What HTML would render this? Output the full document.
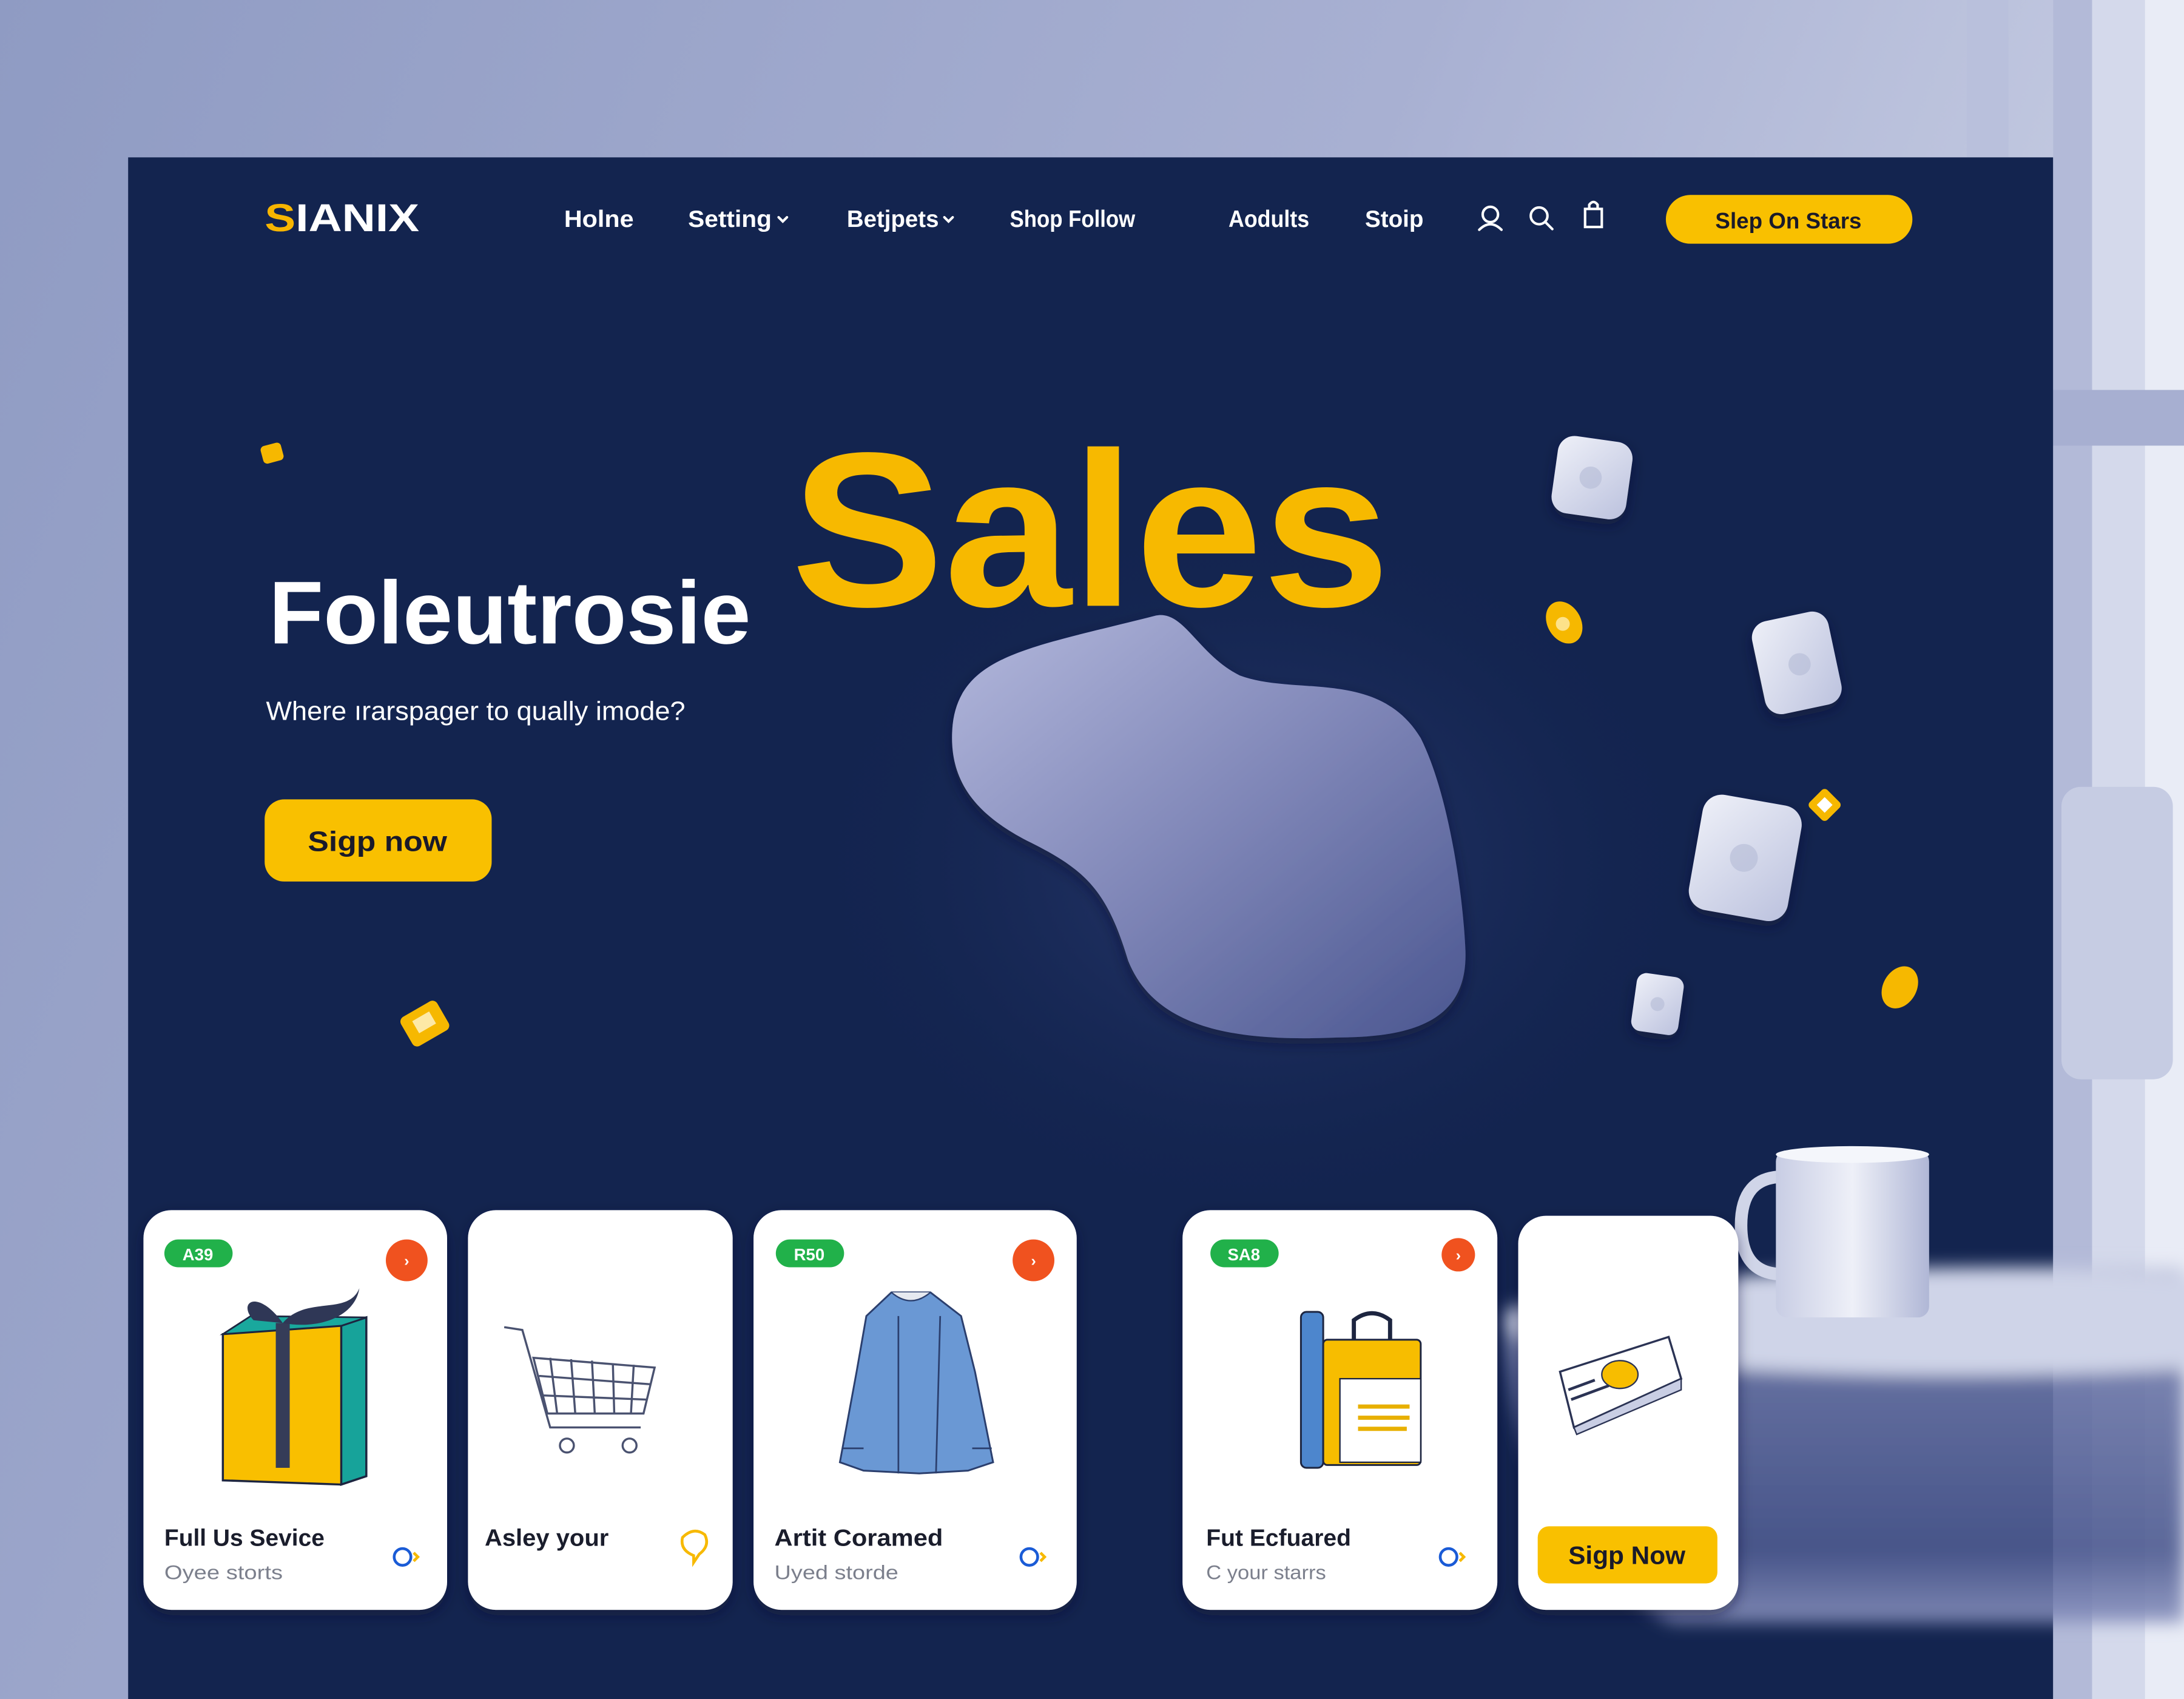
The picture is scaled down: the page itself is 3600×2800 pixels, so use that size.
<!DOCTYPE html>
<html><head><meta charset="utf-8"><style>
html,body{margin:0;padding:0;width:3600px;height:2800px;overflow:hidden;background:#9aa5c9}
svg{display:block}
text{font-family:"Liberation Sans",sans-serif}
</style></head><body>
<svg width="3600" height="2800" viewBox="0 0 1568 1220" preserveAspectRatio="none" xmlns="http://www.w3.org/2000/svg">
<defs>
<linearGradient id="bg" x1="0" y1="0" x2="1" y2="0.3">
<stop offset="0" stop-color="#8f9bc3"/><stop offset="0.6" stop-color="#a8b0d2"/><stop offset="1" stop-color="#c9cfe4"/></linearGradient>
<linearGradient id="blob" x1="0" y1="0" x2="1" y2="1">
<stop offset="0" stop-color="#b3b8dc"/><stop offset="0.5" stop-color="#8087b8"/><stop offset="1" stop-color="#4a5690"/></linearGradient>
<radialGradient id="glow" cx="0.5" cy="0.5" r="0.5">
<stop offset="0" stop-color="#2c3d74" stop-opacity="0.9"/><stop offset="1" stop-color="#13244f" stop-opacity="0"/></radialGradient>
<linearGradient id="tile" x1="0" y1="0" x2="1" y2="1">
<stop offset="0" stop-color="#eef0f8"/><stop offset="1" stop-color="#bcc2de"/></linearGradient>
<linearGradient id="tableside" x1="0" y1="0" x2="0" y2="1">
<stop offset="0" stop-color="#c3c8df"/><stop offset="0.3" stop-color="#6c77a8"/><stop offset="0.8" stop-color="#4d5a90"/><stop offset="1" stop-color="#8a93bf"/></linearGradient>
<linearGradient id="mug" x1="0" y1="0" x2="1" y2="0">
<stop offset="0" stop-color="#c8cde4"/><stop offset="0.5" stop-color="#eef0f8"/><stop offset="1" stop-color="#b0b7d6"/></linearGradient>
<filter id="blur" x="-20%" y="-20%" width="140%" height="140%"><feGaussianBlur stdDeviation="6"/></filter>
<filter id="sh" x="-20%" y="-20%" width="140%" height="140%"><feDropShadow dx="0" dy="4" stdDeviation="5" flood-color="#0a1230" flood-opacity="0.5"/></filter>
</defs>

<rect width="1568" height="1220" fill="url(#bg)"/>
<rect x="1474" y="0" width="94" height="1220" fill="#d4d9eb"/>
<rect x="1412" y="0" width="30" height="113" fill="#b9c0dc"/>
<rect x="1474" y="0" width="28" height="1220" fill="#b3bad8"/>
<rect x="1540" y="0" width="28" height="1220" fill="#e9ecf6"/>
<rect x="1474" y="280" width="94" height="40" fill="#a7afd1"/>
<rect x="1480" y="565" width="80" height="210" rx="14" fill="#c6cce3"/>

<rect x="92" y="113" width="1382" height="1107" fill="#13244f"/>
<ellipse cx="900" cy="620" rx="330" ry="260" fill="url(#glow)"/>

<g filter="url(#blur)">
<path d="M1080 940 Q1200 905 1568 910 L1568 1165 L1200 1165 Q1080 1100 1080 940 Z" fill="url(#tableside)" opacity="0.9"/>
<ellipse cx="1400" cy="950" rx="320" ry="38" fill="#cfd4e8"/>
</g>
<path d="M1280 845 q-30 0 -30 35 q0 35 30 35" fill="none" stroke="#d0d5e8" stroke-width="9"/>
<rect x="1275" y="826" width="110" height="120" rx="8" fill="url(#mug)"/>
<ellipse cx="1330" cy="829" rx="55" ry="6" fill="#f4f6fb"/>

<text x="190" y="166" font-size="28" font-weight="bold" fill="#fff" textLength="111" lengthAdjust="spacingAndGlyphs"><tspan fill="#f7b500">S</tspan>IANIX</text>
<g font-size="17" fill="#fff" font-weight="bold">
<text x="405" y="163" textLength="50" lengthAdjust="spacingAndGlyphs">Holne</text>
<text x="494" y="163" textLength="60" lengthAdjust="spacingAndGlyphs">Setting</text>
<text x="608" y="163" textLength="66" lengthAdjust="spacingAndGlyphs">Betjpets</text>
<text x="725" y="163" textLength="90" lengthAdjust="spacingAndGlyphs">Shop Follow</text>
<text x="882" y="163" textLength="58" lengthAdjust="spacingAndGlyphs">Aodults</text>
<text x="980" y="163" textLength="42" lengthAdjust="spacingAndGlyphs">Stoip</text>
</g>
<g fill="none" stroke="#fff" stroke-width="1.8" stroke-linecap="round">
<path d="M559 156 l3 3 l3 -3"/><path d="M678 156 l3 3 l3 -3"/>
<circle cx="1070" cy="154" r="5.5"/><path d="M1062 165 q8 -8 16 0"/>
<circle cx="1105" cy="155" r="6"/><path d="M1109.5 159.5 l5 5"/>
<path d="M1138 150 h12 v13 h-12 z M1141 150 v-3 q3 -4 6 0 v3"/>
</g>
<rect x="1196" y="140" width="177" height="35" rx="17.5" fill="#f9c000"/>
<text x="1284" y="164" font-size="16" font-weight="bold" fill="#1a1a2a" text-anchor="middle" textLength="105" lengthAdjust="spacingAndGlyphs">Slep On Stars</text>

<text x="568" y="435" font-size="158" font-weight="bold" fill="#f7b900" textLength="430" lengthAdjust="spacingAndGlyphs">Sales</text>
<text x="193" y="462" font-size="64" font-weight="bold" fill="#fff" textLength="346" lengthAdjust="spacingAndGlyphs">Foleutrosie</text>
<text x="191" y="517" font-size="19" fill="#fff" textLength="301" lengthAdjust="spacingAndGlyphs">Where ırarspager to qually imode?</text>
<rect x="190" y="574" width="163" height="59" rx="14" fill="#f9c000"/>
<text x="271" y="611" font-size="20" font-weight="bold" fill="#1a1a2a" text-anchor="middle" textLength="100" lengthAdjust="spacingAndGlyphs">Sigp now</text>

<path d="M830 442 C850 438 860 470 890 485 C930 500 990 480 1020 530 C1040 570 1050 640 1052 680 C1055 730 1020 745 960 745 C890 748 830 740 810 690 C795 640 780 625 740 605 C700 585 680 560 684 520 C690 470 740 465 830 442 Z" fill="url(#blob)" filter="url(#sh)"/>

<g filter="url(#sh)">
<rect x="1116" y="315" width="54" height="56" rx="12" fill="url(#tile)" transform="rotate(8 1143 343)"/>
<rect x="1262" y="442" width="56" height="68" rx="12" fill="url(#tile)" transform="rotate(-12 1290 476)"/>
<rect x="1217" y="574" width="72" height="84" rx="14" fill="url(#tile)" transform="rotate(10 1253 616)"/>
<rect x="1173" y="700" width="34" height="42" rx="7" fill="url(#tile)" transform="rotate(8 1190 721)"/>
</g>
<g fill="#b4bad6" opacity="0.6">
<circle cx="1142" cy="343" r="8"/><circle cx="1292" cy="477" r="8"/><circle cx="1252" cy="616" r="10"/><circle cx="1190" cy="721" r="5"/>
</g>
<g fill="#f6b800">
<rect x="188" y="319" width="15" height="13" rx="3" transform="rotate(-15 195 326)"/>
<ellipse cx="1123" cy="447" rx="12" ry="16" transform="rotate(-30 1123 447)"/>
<rect x="1301" y="569" width="18" height="18" rx="3" transform="rotate(45 1310 578)"/>
<ellipse cx="1364" cy="709" rx="12" ry="16" transform="rotate(30 1364 709)"/>
<rect x="290" y="723" width="30" height="24" rx="4" transform="rotate(-30 305 735)"/>
</g>
<circle cx="1122" cy="448" r="5" fill="#fde28a"/><rect x="1306" y="574" width="8" height="8" fill="#fff" transform="rotate(45 1310 578)"/>
<rect x="298" y="729" width="14" height="10" fill="#fde9a6" transform="rotate(-30 305 735)"/>

<g filter="url(#sh)" fill="#fff">
<rect x="103" y="869" width="218" height="287" rx="20"/>
<rect x="336" y="869" width="190" height="287" rx="20"/>
<rect x="541" y="869" width="232" height="287" rx="20"/>
<rect x="849" y="869" width="226" height="287" rx="20"/>
<rect x="1090" y="873" width="158" height="283" rx="20"/>
</g>
<g font-size="12" font-weight="bold" fill="#fff" text-anchor="middle">
<rect x="118" y="890" width="49" height="20" rx="10" fill="#21b14a"/><text x="142" y="905">A39</text>
<rect x="557" y="890" width="49" height="20" rx="10" fill="#21b14a"/><text x="581" y="905">R50</text>
<rect x="869" y="890" width="49" height="20" rx="10" fill="#21b14a"/><text x="893" y="905">SA8</text>
</g>
<circle cx="292" cy="905" r="15" fill="#f0521f"/><circle cx="742" cy="905" r="15" fill="#f0521f"/><circle cx="1047" cy="901" r="12" fill="#f0521f"/>
<g fill="#fff" font-size="11" font-weight="bold" text-anchor="middle"><text x="292" y="909">›</text><text x="742" y="909">›</text><text x="1047" y="905">›</text></g>

<path d="M160 958 L245 952 L263 946 L263 1060 L245 1066 L160 1063 Z" fill="#f9bf00" stroke="#1d2540" stroke-width="1.5"/>
<path d="M245 952 L263 946 L263 1060 L245 1066 Z" fill="#17a39a" stroke="#1d2540" stroke-width="1.5"/>
<path d="M160 958 L180 945 L263 946 L245 952 Z" fill="#19a89d" stroke="#1d2540" stroke-width="1.2"/>
<rect x="198" y="950" width="10" height="104" fill="#353c58"/>
<path d="M203 950 C185 925 170 935 182 948 Z M203 950 C220 930 250 945 258 925 C255 945 230 955 203 950 Z" fill="#2f3756"/>

<g fill="none" stroke="#4a5270" stroke-width="1.5">
<path d="M362 953 L375 955 L395 1025 L460 1025"/>
<path d="M383 975 L470 982 L462 1015 L393 1015 Z"/>
<path d="M395 975 L400 1015 M410 976 L413 1015 M425 977 L427 1015 M440 979 L441 1015 M455 980 L453 1015 M387 988 L467 994 M390 1002 L464 1005"/>
<circle cx="407" cy="1038" r="5"/><circle cx="452" cy="1038" r="5"/>
</g>

<path d="M640 928 L668 928 L690 945 L700 985 L713 1050 L695 1056 L660 1058 L620 1056 L603 1050 L615 985 L622 945 Z" fill="#6a98d4" stroke="#2b3f6e" stroke-width="1.3"/>
<path d="M640 928 Q654 940 668 928" fill="#e6e9f0" stroke="#2b3f6e"/>
<path d="M645 945 L645 1058 M675 945 L672 1058 M605 1040 L620 1040 M698 1040 L712 1040" stroke="#2b3f6e" stroke-width="1.2"/>

<rect x="934" y="942" width="16" height="112" rx="4" fill="#4d86cd" stroke="#1d2540" stroke-width="1.3"/>
<rect x="950" y="962" width="70" height="90" rx="3" fill="#f7bd00" stroke="#1d2540" stroke-width="1.3"/>
<path d="M972 962 V948 Q985 938 998 948 V962" fill="none" stroke="#1d2540" stroke-width="3"/>
<rect x="962" y="990" width="58" height="60" fill="#fff" stroke="#1d2540" stroke-width="1"/>
<path d="M975 1010 H1012 M975 1018 H1012 M975 1026 H1010" stroke="#e8b000" stroke-width="3"/>

<path d="M1120 985 L1198 960 L1207 990 L1130 1025 Z" fill="#fff" stroke="#2b3354" stroke-width="1.5"/>
<path d="M1130 1025 L1207 990 L1207 998 L1132 1030 Z" fill="#c9cee4" stroke="#2b3354"/>
<ellipse cx="1163" cy="987" rx="13" ry="10" fill="#f7bd00" stroke="#2b3354"/>
<path d="M1128 1005 L1155 995 M1126 998 L1145 991" stroke="#2b3354" stroke-width="2"/>

<g font-size="17" fill="#1a1d2c" font-weight="bold">
<text x="118" y="1110" textLength="115" lengthAdjust="spacingAndGlyphs">Full Us Sevice</text>
<text x="348" y="1110" textLength="89" lengthAdjust="spacingAndGlyphs">Asley your</text>
<text x="556" y="1110" textLength="121" lengthAdjust="spacingAndGlyphs">Artit Coramed</text>
<text x="866" y="1110" textLength="104" lengthAdjust="spacingAndGlyphs">Fut Ecfuared</text>
</g>
<g font-size="14" fill="#7b7f8c">
<text x="118" y="1134" textLength="85" lengthAdjust="spacingAndGlyphs">Oyee storts</text>
<text x="556" y="1134" textLength="89" lengthAdjust="spacingAndGlyphs">Uyed storde</text>
<text x="866" y="1134" textLength="86" lengthAdjust="spacingAndGlyphs">C your starrs</text>
</g>
<g fill="none" stroke-width="2">
<circle cx="289" cy="1118" r="6" stroke="#1a5bd6"/><path d="M297 1115 l3 3 l-3 3" stroke="#f7b900"/>
<circle cx="739" cy="1118" r="6" stroke="#1a5bd6"/><path d="M747 1115 l3 3 l-3 3" stroke="#f7b900"/>
<circle cx="1040" cy="1118" r="6" stroke="#1a5bd6"/><path d="M1048 1115 l3 3 l-3 3" stroke="#f7b900"/>
<path d="M490 1104 q8 -8 16 -2 q4 8 -4 14 l-4 6 l0 -5 q-10 -4 -8 -13 z" stroke="#f7b900"/>
</g>
<rect x="1104" y="1096" width="129" height="41" rx="8" fill="#f9c000"/>
<text x="1168" y="1123" font-size="18" font-weight="bold" fill="#1a1a2a" text-anchor="middle" textLength="84" lengthAdjust="spacingAndGlyphs">Sigp Now</text>
</svg>
</body></html>
